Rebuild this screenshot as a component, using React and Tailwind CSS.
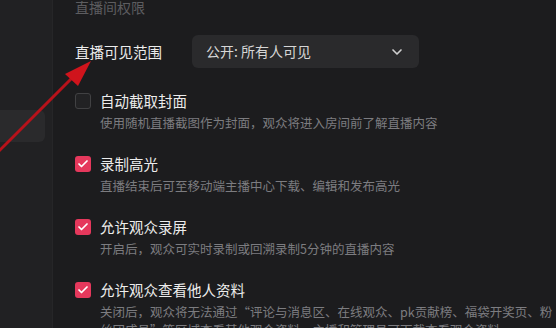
import { ChevronDown, Check } from 'lucide-react'

const font = { fontFamily: '"Noto Sans CJK SC", "Noto Sans", sans-serif' }

const options = [
  {
    title: '自动截取封面',
    desc: '使用随机直播截图作为封面，观众将进入房间前了解直播内容',
    checked: false,
  },
  {
    title: '录制高光',
    desc: '直播结束后可至移动端主播中心下载、编辑和发布高光',
    checked: true,
  },
  {
    title: '允许观众录屏',
    desc: '开启后，观众可实时录制或回溯录制5分钟的直播内容',
    checked: true,
  },
  {
    title: '允许观众查看他人资料',
    desc: '关闭后，观众将无法通过“评论与消息区、在线观众、pk贡献榜、福袋开奖页、粉丝团成员”等区域查看其他观众资料，主播和管理员可下载查看观众资料',
    checked: true,
  },
]

function Box({ checked }) {
  if (checked) {
    return (
      <span className="flex h-4 w-4 shrink-0 items-center justify-center rounded-[3px] bg-[#e5385c]">
        <Check size={12} strokeWidth={3.5} className="text-white" />
      </span>
    )
  }
  return <span className="h-4 w-4 shrink-0 rounded-[3px] border border-[#414143] bg-[#222224]" />
}

export default function App() {
  return (
    <div className="relative flex h-[328px] w-[556px] overflow-hidden bg-[#1c1c1e]" style={font}>
      <div className="w-[53px] shrink-0 border-r border-[#262628] bg-[#212123] pt-[110px]">
        <div className="h-[32px] w-[45px] rounded-r-md bg-[#2a2a2c]" />
      </div>

      <div className="flex min-w-0 flex-1 flex-col pl-[22px]">
        <div className="mt-[-3px] h-5 text-[14px] leading-5 text-[#5d5d60]">直播间权限</div>

        <div className="mt-[18px] flex items-center">
          <span className="w-[117px] text-[14.5px] text-[#ececec]">直播可见范围</span>
          <div className="flex h-[33px] w-[227px] items-center justify-between rounded-md bg-[#2a2a2c] pl-[14px] pr-[14px] text-[14px] text-[#d6d6d6]">
            <span>公开: 所有人可见</span>
            <ChevronDown size={16} strokeWidth={2.5} className="text-[#cfcfcf]" />
          </div>
        </div>

        <div className="mt-[23px] flex flex-col gap-[22px]">
          {options.map((o) => (
            <div key={o.title} className="flex flex-col">
              <div className="flex h-5 items-center gap-[9px]">
                <Box checked={o.checked} />
                <span className="text-[14.5px] text-[#ececec]">{o.title}</span>
              </div>
              <div className="mt-[3px] w-[485px] shrink-0 pl-[25px] text-[12.5px] leading-[18px] text-[#7c7c80]">
                {o.desc}
              </div>
            </div>
          ))}
        </div>
      </div>

      <svg className="pointer-events-none absolute left-0 top-0" width="120" height="170" viewBox="0 0 120 170">
        <line x1="-4" y1="154" x2="72" y2="78" stroke="#b8121a" strokeWidth="3" strokeLinecap="round" />
        <polygon points="91,61 65,74 78,86" fill="#d0141c" />
      </svg>
    </div>
  )
}
